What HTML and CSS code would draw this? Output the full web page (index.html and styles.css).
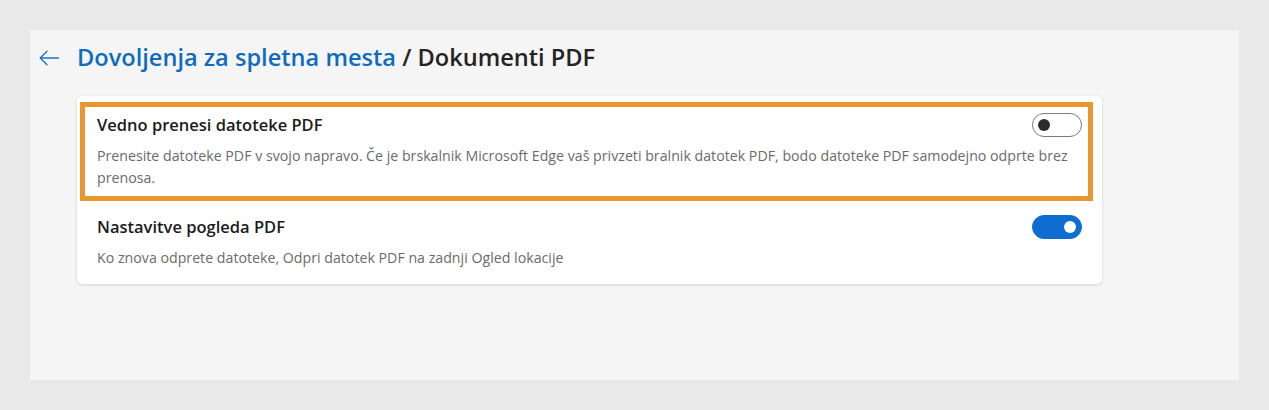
FILE: index.html
```html
<!DOCTYPE html>
<html lang="sl">
<head>
<meta charset="utf-8">
<title>Dokumenti PDF</title>
<link rel="stylesheet" href="styles.css">
</head>
<body>
<div class="panel">
  <div class="header">
    <svg class="back" width="20" height="16" viewBox="0 0 20 16" aria-hidden="true">
      <path d="M19.5 8H1.2M8 1.2L1.2 8L8 14.8" fill="none" stroke="#1a73c8" stroke-width="1.3" stroke-linecap="round" stroke-linejoin="round"/>
    </svg>
    <h1 class="title"><span class="crumb">Dovoljenja za spletna mesta</span> / Dokumenti PDF</h1>
  </div>
  <div class="card">
    <div class="row row-first">
      <div class="row-head">
        <div class="row-title">Vedno prenesi datoteke PDF</div>
        <span class="toggle"><span class="knob"></span></span>
      </div>
      <div class="row-desc">Prenesite datoteke PDF v svojo napravo. Če je brskalnik Microsoft Edge vaš privzeti bralnik datotek PDF, bodo datoteke PDF samodejno odprte brez prenosa.</div>
    </div>
    <div class="row row-second">
      <div class="row-head">
        <div class="row-title">Nastavitve pogleda PDF</div>
        <span class="toggle on"><span class="knob"></span></span>
      </div>
      <div class="row-desc">Ko znova odprete datoteke, Odpri datotek PDF na zadnji Ogled lokacije</div>
    </div>
    <div class="highlight"></div>
  </div>
</div>
</body>
</html>
```

FILE: styles.css
```css
html, body {
  margin: 0;
  padding: 0;
}
body {
  background: #e9e9e9;
  font-family: "Open Sans", "Noto Sans", sans-serif;
  padding: 30px;
}
.panel {
  background: #f5f5f5;
  height: 350px;
  box-sizing: border-box;
  padding: 11px 0 0 9px;
}
.header {
  display: flex;
  align-items: center;
  height: 32px;
}
.back {
  display: block;
  flex: none;
  margin-top: 1px;
}
.title {
  margin: 0 0 0 18px;
  font-size: 23.6px;
  font-weight: 600;
  color: #242424;
  line-height: 32px;
  white-space: nowrap;
}
.crumb {
  color: #0f6cbd;
}
.card {
  position: relative;
  margin: 23px 0 0 38px;
  width: 1025px;
  background: #fff;
  border-radius: 5px;
  box-shadow: 0 1px 3px rgba(0,0,0,0.14), 0 0 1px rgba(0,0,0,0.1);
  padding: 0 20px;
  box-sizing: border-box;
}
.row-first {
  padding: 17px 0 10px;
}
.row-second {
  padding: 16px 0 15px;
}
.row-head {
  display: flex;
  align-items: center;
  justify-content: space-between;
  gap: 16px;
}
.row-title {
  font-size: 16.5px;
  font-weight: 600;
  color: #1b1b1b;
  line-height: 24px;
}
.row-desc {
  margin-top: 8px;
  font-size: 14.2px;
  color: #6b6b6b;
  line-height: 22px;
}
.toggle {
  flex: none;
  width: 50px;
  height: 24px;
  box-sizing: border-box;
  border: 1px solid #7a7a7a;
  border-radius: 12px;
  display: flex;
  align-items: center;
  padding: 0 5px;
  background: #fff;
}
.knob {
  width: 12px;
  height: 12px;
  border-radius: 50%;
  background: #2b2b2b;
}
.toggle.on {
  background: #0f6cd0;
  border-color: #0f6cd0;
  justify-content: flex-end;
}
.toggle.on .knob {
  background: #fff;
}
.highlight {
  position: absolute;
  left: 3px;
  top: 6px;
  width: 1013px;
  height: 99px;
  box-sizing: border-box;
  border: 5px solid #e8962e;
  pointer-events: none;
}
```
